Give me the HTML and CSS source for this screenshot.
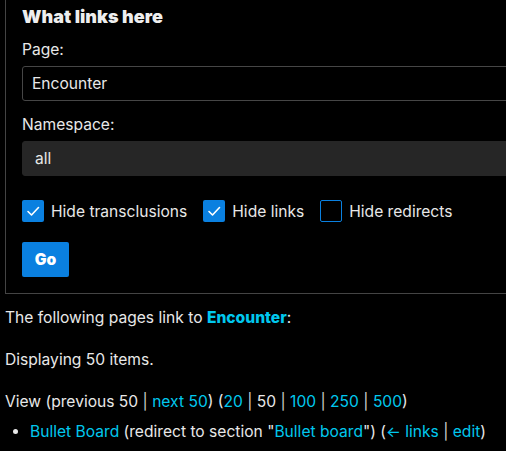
FILE: index.html
```html
<!DOCTYPE html>
<html>
<head>
<meta charset="utf-8">
<link rel="stylesheet" href="styles.css">
</head>
<body>
<div class="page">
  <form class="panel">
    <div class="title">What links here</div>
    <label class="lbl">Page:</label>
    <div class="field">Encounter</div>
    <label class="lbl lbl-ns">Namespace:</label>
    <div class="field select">all</div>
    <div class="checks">
      <span class="check on"><svg viewBox="0 0 22 22" width="22" height="22"><path d="M6 11.5 L9.5 15 L16.5 7.5" fill="none" stroke="#fff" stroke-width="1.6" stroke-linecap="round" stroke-linejoin="round"/></svg></span>
      <span class="ctext">Hide transclusions</span>
      <span class="check on"><svg viewBox="0 0 22 22" width="22" height="22"><path d="M6 11.5 L9.5 15 L16.5 7.5" fill="none" stroke="#fff" stroke-width="1.6" stroke-linecap="round" stroke-linejoin="round"/></svg></span>
      <span class="ctext">Hide links</span>
      <span class="check off"></span>
      <span class="ctext">Hide redirects</span>
    </div>
    <div class="btn">Go</div>
  </form>
  <p class="p1">The following pages link to <a class="strong">Encounter</a>:</p>
  <p class="p2">Displaying 50 items.</p>
  <p class="p3">View (previous 50 <span class="sep">|</span> <a>next 50</a>) (<a>20</a> <span class="sep">|</span> 50 <span class="sep">|</span> <a>100</a> <span class="sep">|</span> <a>250</a> <span class="sep">|</span> <a>500</a>)</p>
  <ul class="list">
    <li><a>Bullet Board</a> (redirect to section "<a>Bullet board</a>") (<a>← links</a> <span class="sep">|</span> <a>edit</a>)</li>
  </ul>
</div>
</body>
</html>
```
FILE: styles.css
```css
html, body {
  margin: 0;
  padding: 0;
  background: #000;
  overflow: hidden;
}
body {
  font-family: Inter, "Noto Sans", sans-serif;
  font-size: 15.6px;
  color: #e8e8e8;
}
.page {
  padding: 0 0 0 5px;
  width: 640px;
}
.panel {
  border: 1px solid #444;
  border-top: none;
  padding: 5px 0 16px 16px;
  margin: 0;
  display: flex;
  flex-direction: column;
  align-items: flex-start;
}
.title {
  font-size: 18px;
  font-weight: 900;
  line-height: 24px;
  color: #eee;
}
.lbl {
  display: block;
  line-height: 24px;
  margin-top: 9px;
}
.lbl-ns {
  margin-top: 12px;
}
.field {
  margin-top: 4px;
  box-sizing: border-box;
  width: 600px;
  height: 35px;
  border: 1px solid #464646;
  border-radius: 3px;
  padding: 0 9px;
  line-height: 33px;
}
.select {
  background: #262626;
  border-color: #262626;
  padding-left: 12px;
}
.checks {
  display: flex;
  align-items: center;
  margin-top: 24px;
  height: 22px;
}
.check {
  box-sizing: border-box;
  width: 22px;
  height: 22px;
  border-radius: 2px;
  display: block;
}
.check svg { display: block; }
.check.on { background: #0a80e0; }
.check.off { border: 1.5px solid #0a80e0; }
.ctext {
  margin: 0 16px 0 7px;
}
.btn {
  margin-top: 20px;
  background: #0a80e0;
  color: #fff;
  font-weight: 900;
  font-size: 15.6px;
  width: 47px;
  height: 35px;
  line-height: 35px;
  text-align: center;
  border-radius: 2px;
}
p {
  margin: 0;
  line-height: 24px;
}
.p1 { margin-top: 12px; }
.p2 { margin-top: 18px; }
.p3 { margin-top: 18px; }
a { color: #00c8ee; }
a.strong { font-weight: 800; }
.sep { color: #ccc; }
.list {
  margin: 6px 0 0 0;
  padding: 0 0 0 25px;
  line-height: 24px;
}
```
